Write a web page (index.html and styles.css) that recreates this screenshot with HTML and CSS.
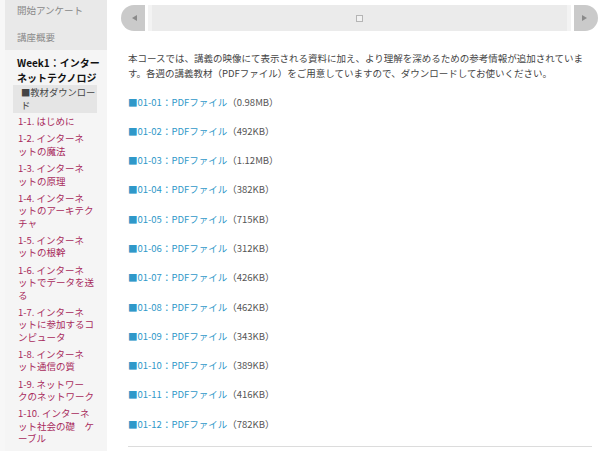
FILE: index.html
```html
<!DOCTYPE html>
<html lang="ja">

<head>
    <meta charset="UTF-8">
    <title>教材ダウンロード</title>
    <link rel="stylesheet" href="styles.css">
</head>

<body>
    <div class="wrap">

        <nav class="sidebar">
            <div class="top">
                <a href="#">開始アンケート</a>
                <a href="#">講座概要</a>
            </div>
            <h3 class="week">Week1：インターネットテクノロジ</h3>
            <div class="dl">■教材ダウンロード</div>
            <ul class="lessons">
                <li><a href="#">1-1. はじめに</a></li>
                <li><a href="#">1-2. インターネ<br>ットの魔法</a></li>
                <li><a href="#">1-3. インターネ<br>ットの原理</a></li>
                <li><a href="#">1-4. インターネ<br>ットのアーキテク<br>チャ</a></li>
                <li><a href="#">1-5. インターネ<br>ットの根幹</a></li>
                <li><a href="#">1-6. インターネ<br>ットでデータを送<br>る</a></li>
                <li><a href="#">1-7. インターネ<br>ットに参加するコ<br>ンピュータ</a></li>
                <li><a href="#">1-8. インターネ<br>ット通信の質</a></li>
                <li><a href="#">1-9. ネットワー<br>クのネットワーク</a></li>
                <li><a href="#">1-10. インターネ<br>ット社会の礎　ケ<br>ーブル</a></li>
            </ul>
        </nav>

        <main class="content">
            <div class="scroller">
                <div class="btn left"><span class="tri-l"></span></div>
                <div class="track"><span class="thumb"></span></div>
                <div class="btn right"><span class="tri-r"></span></div>
            </div>

            <p class="intro">本コースでは、講義の映像にて表示される資料に加え、より理解を深めるための参考情報が追加されています。各週の講義教材（PDFファイル）をご用意していますので、ダウンロードしてお使いください。</p>

            <p class="file"><a href="#">■01-01：PDFファイル</a>（0.98MB）</p>
            <p class="file"><a href="#">■01-02：PDFファイル</a>（492KB）</p>
            <p class="file"><a href="#">■01-03：PDFファイル</a>（1.12MB）</p>
            <p class="file"><a href="#">■01-04：PDFファイル</a>（382KB）</p>
            <p class="file"><a href="#">■01-05：PDFファイル</a>（715KB）</p>
            <p class="file"><a href="#">■01-06：PDFファイル</a>（312KB）</p>
            <p class="file"><a href="#">■01-07：PDFファイル</a>（426KB）</p>
            <p class="file"><a href="#">■01-08：PDFファイル</a>（462KB）</p>
            <p class="file"><a href="#">■01-09：PDFファイル</a>（343KB）</p>
            <p class="file"><a href="#">■01-10：PDFファイル</a>（389KB）</p>
            <p class="file"><a href="#">■01-11：PDFファイル</a>（416KB）</p>
            <p class="file"><a href="#">■01-12：PDFファイル</a>（782KB）</p>

            <hr>
        </main>

    </div>
</body>

</html>
```

FILE: styles.css
```css
body {
    margin: 0;
    background-color: #fff;
    font-family: "Noto Sans CJK JP", "Noto Sans", sans-serif;
    line-break: loose;
}

a {
    text-decoration: none;
}

.wrap {
    display: flex;
    align-items: flex-start;
    height: 451px;
    overflow: hidden;
    background-color: #f7f7f7;
}

.sidebar {
    width: 102px;
    flex-shrink: 0;
    margin-left: 5px;
    background-color: #f5f5f5;
    min-height: 451px;
}

.top {
    background-color: #e9e9e9;
    height: 50px;
}

.top a {
    display: block;
    padding: 7px 12px;
    font-size: 9.5px;
    line-height: 13px;
    color: #888;
}

.top a:first-child {
    padding-top: 3.5px;
}

.week {
    margin: 0;
    padding: 4.5px 4px 0 12px;
    height: 30px;
    font-size: 10px;
    line-height: 15px;
    font-weight: bold;
    color: #111;
}

.dl {
    margin: 0 10px 0 8px;
    padding: 1px 0 0 8px;
    height: 27px;
    background-color: #e5e5e5;
    font-size: 9.3px;
    line-height: 13px;
    color: #444;
}

.lessons {
    list-style: none;
    margin: 0;
    padding: 0.5px 2px 0 13px;
}

.lessons li {
    padding: 2.33px 0;
    font-size: 9.5px;
    line-height: 12.5px;
    white-space: nowrap;
}

.lessons a {
    color: #a82a5c;
}

.content {
    flex: 1;
    align-self: stretch;
    background-color: #fff;
    padding: 5px 8px 0 21px;
}

/* fake horizontal scroll bar */
.scroller {
    display: flex;
    height: 26px;
    margin: 0 -6px 0 -7px;
}

.btn {
    width: 24px;
    background-color: #cacaca;
    display: flex;
    align-items: center;
    justify-content: center;
}

.btn.left {
    border-radius: 13px 0 0 13px;
}

.btn.right {
    border-radius: 0 13px 13px 0;
}

.tri-l {
    border-right: 5px solid #8a8a8a;
    border-top: 3.5px solid transparent;
    border-bottom: 3.5px solid transparent;
    margin-left: 3px;
}

.tri-r {
    border-left: 5px solid #8a8a8a;
    border-top: 3.5px solid transparent;
    border-bottom: 3.5px solid transparent;
    margin-right: 3px;
}

.track {
    flex: 1;
    margin: 0 3px;
    background-color: #ebebeb;
    border-left: 4px solid #f3f3f3;
    border-right: 4px solid #f3f3f3;
    display: flex;
    align-items: center;
    justify-content: center;
}

.thumb {
    width: 5px;
    height: 5px;
    border: 1px solid #b5b5b5;
    background-color: #f2f2f2;
}

.intro {
    margin: 19.5px 0 14px;
    font-size: 9.5px;
    line-height: 15px;
    color: #444;
}

.file {
    margin: 0 0 14.3px;
    font-size: 9.5px;
    line-height: 15px;
    color: #555;
}

.file a {
    color: #2f98c9;
}

hr {
    margin: 0;
    border: none;
    border-top: 1px solid #dcdcdc;
}
```
